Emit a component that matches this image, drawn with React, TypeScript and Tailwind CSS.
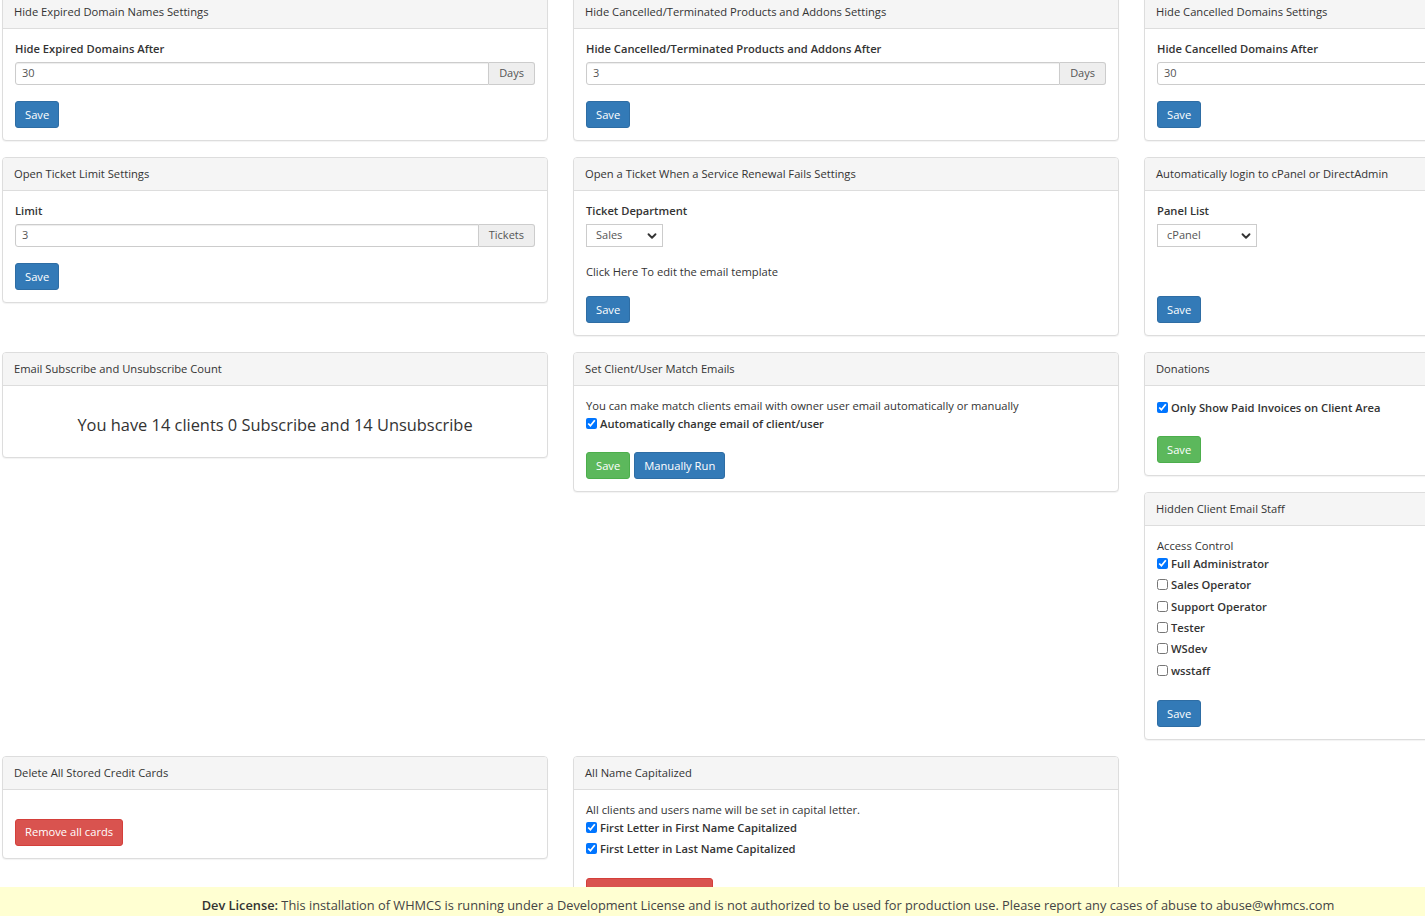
import React from 'react';
import { ChevronDown } from 'lucide-react';

function Panel({ title, children }: { title: string; children: React.ReactNode }) {
  return (
    <div className="bg-white border border-[#ddd] rounded-[4px] shadow-[0_1px_1px_rgba(0,0,0,0.05)]">
      <div className="bg-[#f5f5f5] border-b border-[#ddd] rounded-t-[3px] px-[11px] py-[8px] text-[11.2px] leading-[16px] text-[#333]">
        {title}
      </div>
      <div className="px-[12px] pt-[11px] pb-[12px]">{children}</div>
    </div>
  );
}

function Label({ children }: { children: React.ReactNode }) {
  return <div className="text-[11.2px] leading-[17px] font-semibold text-[#333] mb-[5px]">{children}</div>;
}

function AddonInput({ value, addon }: { value: string; addon: string }) {
  return (
    <div className="flex h-[23px]">
      <div className="flex-1 flex items-center border border-[#ccc] rounded-l-[3px] px-[6px] text-[11px] text-[#555] shadow-[inset_0_1px_1px_rgba(0,0,0,0.075)]">
        {value}
      </div>
      <div className="flex items-center border border-l-0 border-[#ccc] rounded-r-[3px] bg-[#eee] px-[10px] text-[11px] text-[#555]">
        {addon}
      </div>
    </div>
  );
}

function Select({ value, width }: { value: string; width: string }) {
  return (
    <div className={`relative h-[23px] border border-[#ccc] flex items-center pl-[9px] text-[11px] text-[#555] ${width}`}>
      {value}
      <ChevronDown size={14} strokeWidth={3.2} className="absolute right-[3px] top-[4px] text-[#333]" />
    </div>
  );
}

function Btn({
  children,
  color = 'blue',
}: {
  children: React.ReactNode;
  color?: 'blue' | 'green' | 'red';
}) {
  const colors = {
    blue: 'bg-[#337ab7] border-[#2e6da4]',
    green: 'bg-[#5cb85c] border-[#4cae4c]',
    red: 'bg-[#d9534f] border-[#d43f3a]',
  };
  return (
    <button
      className={`${colors[color]} h-[27px] border rounded-[3px] px-[9px] text-[11.2px] text-white leading-none`}
    >
      {children}
    </button>
  );
}

function Check({ label, checked = false }: { label: string; checked?: boolean }) {
  return (
    <label className="flex items-center h-[18px] text-[11.2px] font-semibold text-[#333]">
      <input type="checkbox" defaultChecked={checked} className="w-[11px] h-[11px] m-0 mr-[3px] mb-[2px]" />
      {label}
    </label>
  );
}

export default function App() {
  const roles = ['Sales Operator', 'Support Operator', 'Tester', 'WSdev', 'wsstaff'];

  return (
    <div
      className="w-[1425px] h-[916px] overflow-hidden bg-white relative"
      style={{ fontFamily: '"Open Sans", "Noto Sans", Arial, sans-serif' }}
    >
      <div className="-mt-[5px] ml-[2px] grid grid-cols-[546px_546px_546px] gap-x-[25px] gap-y-[16px] items-start">
        {/* row 1 */}
        <Panel title="Hide Expired Domain Names Settings">
          <Label>Hide Expired Domains After</Label>
          <AddonInput value="30" addon="Days" />
          <div className="mt-[16px]">
            <Btn>Save</Btn>
          </div>
        </Panel>
        <Panel title="Hide Cancelled/Terminated Products and Addons Settings">
          <Label>Hide Cancelled/Terminated Products and Addons After</Label>
          <AddonInput value="3" addon="Days" />
          <div className="mt-[16px]">
            <Btn>Save</Btn>
          </div>
        </Panel>
        <Panel title="Hide Cancelled Domains Settings">
          <Label>Hide Cancelled Domains After</Label>
          <div className="h-[23px] flex items-center border border-[#ccc] rounded-[3px] px-[6px] text-[11px] text-[#555]">30</div>
          <div className="mt-[16px]">
            <Btn>Save</Btn>
          </div>
        </Panel>

        {/* row 2 */}
        <Panel title="Open Ticket Limit Settings">
          <Label>Limit</Label>
          <AddonInput value="3" addon="Tickets" />
          <div className="mt-[16px]">
            <Btn>Save</Btn>
          </div>
        </Panel>
        <Panel title="Open a Ticket When a Service Renewal Fails Settings">
          <Label>Ticket Department</Label>
          <Select value="Sales" width="w-[77px]" />
          <p className="mt-[16px] text-[11.2px] leading-[17px] text-[#333]">Click Here To edit the email template</p>
          <div className="mt-[16px]">
            <Btn>Save</Btn>
          </div>
        </Panel>
        <Panel title="Automatically login to cPanel or DirectAdmin">
          <Label>Panel List</Label>
          <Select value="cPanel" width="w-[100px]" />
          <div className="mt-[16px] h-[17px]" />
          <div className="mt-[16px]">
            <Btn>Save</Btn>
          </div>
        </Panel>

        {/* row 3 */}
        <Panel title="Email Subscribe and Unsubscribe Count">
          <h4 className="text-center text-[16.4px] leading-[23px] text-[#333] mt-[16px] mb-[9px]">
            You have 14 clients 0 Subscribe and 14 Unsubscribe
          </h4>
        </Panel>
        <Panel title="Set Client/User Match Emails">
          <p className="text-[11.2px] leading-[17px] text-[#333]">
            You can make match clients email with owner user email automatically or manually
          </p>
          <div className="mt-[1px]">
            <Check label="Automatically change email of client/user" checked />
          </div>
          <div className="mt-[19px] flex gap-[4px]">
            <Btn color="green">Save</Btn>
            <Btn>Manually Run</Btn>
          </div>
        </Panel>
        <div className="flex flex-col gap-[16px]">
          <Panel title="Donations">
            <div className="pt-[2px]">
              <Check label="Only Show Paid Invoices on Client Area" checked />
            </div>
            <div className="mt-[19px]">
              <Btn color="green">Save</Btn>
            </div>
          </Panel>
          <Panel title="Hidden Client Email Staff">
            <div className="text-[11.2px] leading-[17px] text-[#333]">Access Control</div>
            <div className="flex flex-col gap-[3.4px] mt-[1px]">
              <Check label="Full Administrator" checked />
              {roles.map((r) => (
                <Check key={r} label={r} />
              ))}
            </div>
            <div className="mt-[20px]">
              <Btn>Save</Btn>
            </div>
          </Panel>
        </div>

        {/* row 4 */}
        <Panel title="Delete All Stored Credit Cards">
          <div className="mt-[17px]">
            <Btn color="red">Remove all cards</Btn>
          </div>
        </Panel>
        <Panel title="All Name Capitalized">
          <p className="text-[11.2px] leading-[17px] text-[#333]">
            All clients and users name will be set in capital letter.
          </p>
          <div className="flex flex-col gap-[3px] mt-[1px]">
            <Check label="First Letter in First Name Capitalized" checked />
            <Check label="First Letter in Last Name Capitalized" checked />
          </div>
          <div className="mt-[19px]">
            <Btn color="red">All Name Capitalized</Btn>
          </div>
        </Panel>
        <div />
      </div>

      <div className="fixed left-0 bottom-0 w-[1536px] h-[29px] bg-[#ffffd2] text-center text-[12.8px] leading-[18px] pt-[9px] text-[#444]">
        <strong className="font-semibold text-[#333]">Dev License:</strong> This installation of WHMCS is running under a
        Development License and is not authorized to be used for production use. Please report any cases of abuse to
        abuse@whmcs.com
      </div>
    </div>
  );
}
